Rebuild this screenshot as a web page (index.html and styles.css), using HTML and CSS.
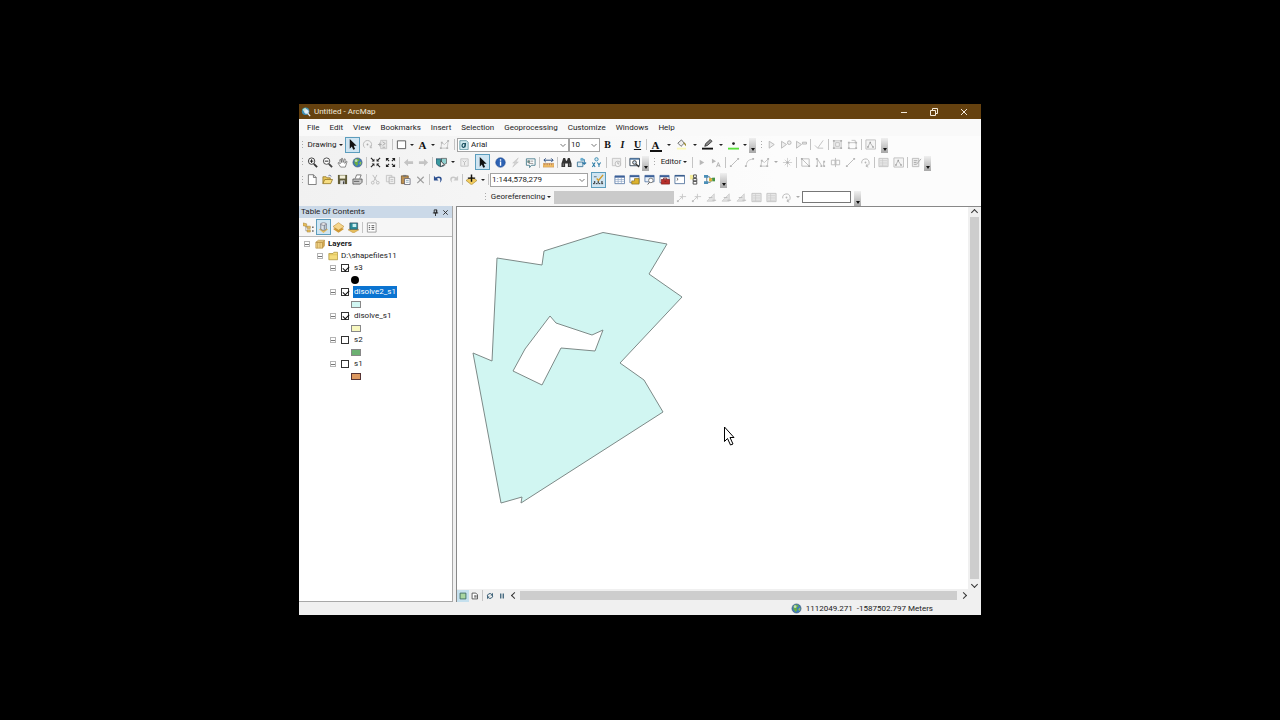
FILE: index.html
```
<!DOCTYPE html>
<html lang="en">
<head>
  <meta charset="UTF-8">
  <meta name="viewport" content="width=device-width, initial-scale=1.0">
  <title>Untitled - ArcMap</title>
  <link rel="stylesheet" href="styles.css">
</head>
<body>
  <!-- icon set -->
  <svg class="sprite" aria-hidden="true">
    <symbol id="i-arrow" viewBox="0 0 12 12"><path d="M3 0v10.500l2.300-2.300 1.500 3.500 2-.9L7.300 7.400h3.200z" fill="#111"/></symbol>
    <symbol id="i-rotate" viewBox="0 0 12 12"><path d="M3 9.500a4.500 4.500 0 1 1 6 0M9 9.500V7M9 9.500h2" fill="none" stroke="#b8b8b8"/><circle cx="6" cy="6" r="1" fill="#aaa"/></symbol>
    <symbol id="i-zoomto" viewBox="0 0 12 12"><path d="M4 1.500h6.500v9H4z" fill="#e8e8e8" stroke="#c4c4c4"/><path d="M1 6h4M3 4v4M6 3l3 2-3 2M6 9h3" fill="none" stroke="#aaa"/></symbol>
    <symbol id="i-rect" viewBox="0 0 12 12"><path d="M1.500 2h9v8.500h-9z" fill="#fff" stroke="#555"/></symbol>
    <symbol id="i-vertex" viewBox="0 0 12 12"><path d="M2 10L3 4l3 2 4-4-1 8z" fill="none" stroke="#c4c4c4"/><path d="M1 9h2v2H1zM2 3h2v2H2zM9 1h2v2H9zM8 9h2v2H8z" fill="#b5b5b5"/></symbol>
    <symbol id="i-zoomin" viewBox="0 0 12 12"><circle cx="5" cy="4.500" r="3.500" fill="#fff" stroke="#333"/><path d="M7.500 7.500L11 11" stroke="#333" stroke-width="2"/><path d="M3 4.500h4M5 2.500v4" stroke="#111"/></symbol>
    <symbol id="i-zoomout" viewBox="0 0 12 12"><circle cx="5" cy="4.500" r="3.500" fill="#fff" stroke="#444"/><path d="M7.500 7.500L11 11" stroke="#444" stroke-width="2"/><path d="M3 4.500h4" stroke="#111"/></symbol>
    <symbol id="i-pan" viewBox="0 0 12 12"><path d="M4 11L1 6.500l1-.6L3.500 7.500 3 3l1-.4L5 6l0-4.500h1L6.700 6 8 2l1 .3L8.500 7l1.700-2.500.8.500L9 11z" fill="#fff" stroke="#555" stroke-width=".7"/></symbol>
    <symbol id="i-globe" viewBox="0 0 12 12"><circle cx="6" cy="6" r="5" fill="#3c7cc0" stroke="#456" stroke-width=".6"/><path d="M3 2.500l4-1 1.500 2L6 5.500l1 2L5 10 2.500 6.500z" fill="#69ab45"/><path d="M9 5l1.500 1L9 9 8 7z" fill="#8cc152"/><circle cx="4.500" cy="4" r="1.500" fill="#fff" opacity=".6"/></symbol>
    <symbol id="i-shrink" viewBox="0 0 12 12"><path d="M1 1l3 3M11 1L8 4M1 11l3-3M11 11L8 8" stroke="#222" stroke-width="1.200"/><path d="M4.800 1.800v3h-3zM7.200 1.800v3h3zM4.800 10.200v-3h-3zM7.200 10.200v-3h3z" fill="#222"/></symbol>
    <symbol id="i-grow" viewBox="0 0 12 12"><path d="M2 2l2.500 2.500M10 2L7.500 4.500M2 10l2.500-2.500M10 10L7.500 7.500" stroke="#222" stroke-width="1.200"/><path d="M1 1h3.500L1 4.500zM11 1H7.500L11 4.500zM1 11h3.500L1 7.500zM11 11H7.500L11 7.500z" fill="#222"/></symbol>
    <symbol id="i-back" viewBox="0 0 12 12"><path d="M1 6l4.500-4v2.500H11v3H5.500V10z" fill="#c4c4c4"/></symbol>
    <symbol id="i-forward" viewBox="0 0 12 12"><path d="M11 6L6.500 2v2.500H1v3h5.500V10z" fill="#c4c4c4"/></symbol>
    <symbol id="i-select" viewBox="0 0 12 12"><path d="M0 2h6v4l2 1v3H3L0 7z" fill="#3b9aa0" stroke="#235" stroke-width=".7"/><path d="M6 1.500h5.500v5.500L9 8 6 6z" fill="#8fd0cf" stroke="#444" stroke-width=".7"/><path d="M5 4v7l2-2h2.500z" fill="#fff" stroke="#222" stroke-width=".7"/></symbol>
    <symbol id="i-clear" viewBox="0 0 12 12"><path d="M2 2h8v8H2z" fill="#eee" stroke="#c4c4c4"/><path d="M4 4l2 2 2-2M6 6v3" fill="none" stroke="#bbb"/></symbol>
    <symbol id="i-info" viewBox="0 0 12 12"><circle cx="6" cy="6" r="5.200" fill="#2c62b4" stroke="#1d4688" stroke-width=".6"/><path d="M5.300 2.500h1.500V4H5.300zM5.300 5h1.500v4.500H5.300z" fill="#fff"/></symbol>
    <symbol id="i-bolt" viewBox="0 0 12 12"><path d="M9 1L3 6.500h2.500L3 11l6-5.500H6.500z" fill="#d4d4d4" stroke="#bbb" stroke-width=".5"/></symbol>
    <symbol id="i-popup" viewBox="0 0 12 12"><path d="M1.500 2h9.500v7H7L5 11.500V9H1.500z" fill="#fff" stroke="#4a7d8c"/><path d="M3 4h2v2H3zM6 4.500h3M4 7h5" fill="#5a9" stroke="#666" stroke-width=".7"/></symbol>
    <symbol id="i-measure" viewBox="0 0 12 12"><path d="M0 7h12v4H0z" fill="#f2c166" stroke="#c08a50" stroke-width=".6"/><path d="M2 7v2M4.500 7v2M7 7v2M9.500 7v2" stroke="#845" stroke-width=".6"/><path d="M1 3.500h10M3 1.500L1 3.500l2 2M9 1.500l2 2-2 2" fill="none" stroke="#247"/></symbol>
    <symbol id="i-find" viewBox="0 0 12 12"><path d="M2.500 1h2l1 3h1l1-3h2L11.500 7v4H7.500V7h-3v4H.5V7z" fill="#333"/><path d="M2.500 7v3M9.500 7v3" stroke="#888"/></symbol>
    <symbol id="i-route" viewBox="0 0 12 12"><path d="M1.500 5.500h6v5h-6z" fill="#dcebf3" stroke="#447a9a"/><path d="M5 3h4v5M7 6l2 2 2-2" fill="none" stroke="#2f7aa8" stroke-width="1.200"/><path d="M5 1h3v3H5z" fill="#6aaed0"/></symbol>
    <symbol id="i-xy" viewBox="0 0 12 12"><circle cx="6" cy="2.500" r="1.800" fill="#d7edf5" stroke="#3b8bb0"/><path d="M1.500 6l3 5M4.500 6l-3 5M7 6l1.700 2.500L10.500 6M8.700 8.500V11" fill="none" stroke="#2679a5" stroke-width="1.100"/></symbol>
    <symbol id="i-time" viewBox="0 0 12 12"><path d="M1.500 1.500h9v8h-9z" fill="#eee" stroke="#c4c4c4"/><circle cx="7.500" cy="7.500" r="3" fill="#f5f5f5" stroke="#bbb"/><path d="M7.500 5.500v2H9" fill="none" stroke="#aaa"/></symbol>
    <symbol id="i-viewer" viewBox="0 0 12 12"><path d="M1 1.500h10.500v8H1z" fill="#fff" stroke="#345"/><path d="M1 2.200h10" stroke="#4a78a8" stroke-width="1.500"/><circle cx="6" cy="6" r="2" fill="#cde" stroke="#333"/><path d="M7.500 7.500L11 11" stroke="#333" stroke-width="1.500"/></symbol>
    <symbol id="i-new" viewBox="0 0 12 12"><path d="M1.500.8H7L10 3.800v7.700H1.500z" fill="#fff" stroke="#555" stroke-width=".8"/><path d="M7 .8v3h3" fill="none" stroke="#555" stroke-width=".8"/></symbol>
    <symbol id="i-open" viewBox="0 0 12 12"><path d="M1 10.500V3h3.500l1 1.200H9V6" fill="#e8c65a" stroke="#8a6d1d" stroke-width=".8"/><path d="M1 10.500L3 6h8.500l-2 4.500z" fill="#f7de82" stroke="#8a6d1d" stroke-width=".8"/><path d="M7 2c1-1 2.500-.8 3 .8" fill="none" stroke="#458" stroke-width=".8"/></symbol>
    <symbol id="i-save" viewBox="0 0 12 12"><path d="M1 1h10v10H1z" fill="#5f5b38"/><path d="M3 1.500h6V5H3z" fill="#f3f0d8"/><path d="M3.500 7h5v4h-5z" fill="#ddd"/><path d="M6.500 8H8v3H6.500z" fill="#444"/></symbol>
    <symbol id="i-print" viewBox="0 0 12 12"><path d="M3.500 5L5 1h5L8.500 5" fill="#fff" stroke="#555" stroke-width=".8"/><path d="M1 5.500h10V9l-2 2H1z" fill="#ccc" stroke="#444" stroke-width=".8"/><path d="M2 8h6" stroke="#555"/></symbol>
    <symbol id="i-cut" viewBox="0 0 12 12"><path d="M3 1l4.500 7M7.500 1L4 8" stroke="#bbb"/><circle cx="3" cy="9.500" r="1.500" fill="none" stroke="#bbb"/><circle cx="8.500" cy="9.500" r="1.500" fill="none" stroke="#bbb"/></symbol>
    <symbol id="i-copy" viewBox="0 0 12 12"><path d="M1.500 1.500h6v7h-6z" fill="#eee" stroke="#c4c4c4"/><path d="M4.500 3.500h6v7h-6z" fill="#eee" stroke="#b5b5b5"/><path d="M6 6h3M6 8h3" stroke="#c4c4c4"/></symbol>
    <symbol id="i-paste" viewBox="0 0 12 12"><path d="M1.500 2h7.500v8.500H1.500z" fill="#bd9152" stroke="#6d5024" stroke-width=".8"/><path d="M3.500 1h3.500v2H3.500z" fill="#777"/><path d="M5 5h6v6.500H5z" fill="#fff" stroke="#556" stroke-width=".8"/><path d="M6.500 7h3M6.500 9h3" stroke="#79a" stroke-width=".8"/></symbol>
    <symbol id="i-delete" viewBox="0 0 12 12"><path d="M2.500 3l7 7M9.500 3l-7 7" stroke="#9d9d9d" stroke-width="1.300"/></symbol>
    <symbol id="i-undo" viewBox="0 0 12 12"><path d="M1 2v5h5L4.200 5.200C7 3 9 5 7.500 9.500 11.500 6 9.500.5 2.800 3.700z" fill="#2c4f8f"/></symbol>
    <symbol id="i-redo" viewBox="0 0 12 12"><path d="M11 2v5H6l1.800-1.800C5 3 3 5 4.500 9.500.5 6 2.500.5 9.200 3.700z" fill="#c8c8c8"/></symbol>
    <symbol id="i-add" viewBox="0 0 12 12"><path d="M0 7l6-3.500L12 7l-6 4.800z" fill="#f3cd5f" stroke="#9b7a22" stroke-width=".6"/><path d="M6 .5v8M2 4.500h8" stroke="#111" stroke-width="1.600"/></symbol>
    <symbol id="i-sketch" viewBox="0 0 12 12"><path d="M0 10.500h12" stroke="#222" stroke-dasharray="2 1"/><path d="M1 8h1.500v1.500H1zM5 8h1.500v1.500H5zM9 8h1.500v1.500H9z" fill="#222"/><path d="M4 5l2 2 5-6" fill="none" stroke="#d49a25" stroke-width="1.500"/><path d="M1 3h3" stroke="#567"/></symbol>
    <symbol id="i-table" viewBox="0 0 12 12"><path d="M1 2h10.500v8.500H1z" fill="#fff" stroke="#446a9c" stroke-width=".8"/><path d="M1 2h10.500v2H1z" fill="#3b5f98"/><path d="M1 6h10M1 8h10M4.500 4v6M8 4v6" stroke="#8aa3c4" stroke-width=".7"/></symbol>
    <symbol id="i-catalog" viewBox="0 0 12 12"><path d="M1 1.500h10v8H1z" fill="#fff" stroke="#446a9c" stroke-width=".8"/><path d="M1 1.500h10v2H1z" fill="#3b5f98"/><path d="M3 7.500h3V5h5v6H3z" fill="#dcb22e" stroke="#7d6418" stroke-width=".7"/></symbol>
    <symbol id="i-searchwin" viewBox="0 0 12 12"><path d="M1 1.500h10v7H1z" fill="#e8f0f8" stroke="#446a9c" stroke-width=".8"/><path d="M1 1.500h10v2H1z" fill="#3b5f98"/><circle cx="7.500" cy="7" r="2.500" fill="#fff" stroke="#777"/><path d="M6 9l-2 2.500" stroke="#555"/></symbol>
    <symbol id="i-toolbox" viewBox="0 0 12 12"><path d="M1 1.500h10v8H1z" fill="#fff" stroke="#446a9c" stroke-width=".8"/><path d="M1 1.500h10v2H1z" fill="#3b5f98"/><path d="M2.500 6h9v5h-9z" fill="#b92f2b" stroke="#7a1816" stroke-width=".7"/><path d="M5 6V4.500h3.500V6M6 8h2" fill="none" stroke="#722"/></symbol>
    <symbol id="i-python" viewBox="0 0 12 12"><path d="M1 1.500h10.500v9H1z" fill="#fff" stroke="#345a8c" stroke-width=".8"/><path d="M1 2h10.500" stroke="#345a8c" stroke-width="1.600"/><path d="M3 4.500l1.500 1.300L3 7" fill="none" stroke="#333" stroke-width=".8"/></symbol>
    <symbol id="i-model" viewBox="0 0 12 12"><path d="M3 2v8M3 3h3l1 2h3M3 9h4l2-3" fill="none" stroke="#356" stroke-width=".8"/><path d="M0 1h4.500v3H0zM0 8h4.500v3H0z" fill="#4b8fb8"/><path d="M5.500 4.500h3v3.500h-3z" fill="#dab22c"/><path d="M9 4h3v4H9z" fill="#469444"/></symbol>
    <symbol id="i-steps" viewBox="0 0 12 12"><path d="M1 1h4v5H1z" fill="#f4ec9a"/><path d="M5 1h3v3H5zM4.500 5h4v2.500h-4zM4.500 8h4v3h-4z" fill="#fff" stroke="#333" stroke-width=".9"/></symbol>
    <symbol id="i-play" viewBox="0 0 12 12"><path d="M3.500 2.500l5.500 3.500-5.500 4z" fill="#eee" stroke="#b8b8b8"/></symbol>
    <symbol id="i-playplus" viewBox="0 0 12 12"><path d="M.5 2.500l5.500 3.500-5.500 4z" fill="#eee" stroke="#b8b8b8"/><circle cx="9" cy="4" r="2" fill="#eee" stroke="#b5b5b5"/></symbol>
    <symbol id="i-playminus" viewBox="0 0 12 12"><path d="M.5 2.500l5.500 3.500-5.500 4z" fill="#eee" stroke="#b8b8b8"/><path d="M7 3.500h4.500v2H7z" fill="#eee" stroke="#b5b5b5"/></symbol>
    <symbol id="i-line" viewBox="0 0 12 12"><path d="M2.500 9.500l7-7" stroke="#b8b8b8"/><path d="M1 9h2v2H1zM9 1h2v2H9z" fill="#b5b5b5"/></symbol>
    <symbol id="i-angle" viewBox="0 0 12 12"><path d="M1 7l3 3 6-8.500M4 10h6" fill="none" stroke="#c0c0c0"/></symbol>
    <symbol id="i-arc" viewBox="0 0 12 12"><path d="M2.500 10C2.500 5 5 2.500 9.500 2.500" fill="none" stroke="#c4c4c4"/><path d="M1 9h2v2H1zM9 1h2v2H9z" fill="#b5b5b5"/></symbol>
    <symbol id="i-group" viewBox="0 0 12 12"><path d="M2 2h8v8H2zM4 4h4v4H4z" fill="#f2f2f2" stroke="#c0c0c0"/><path d="M1 1h2v2H1zM9 1h2v2H9zM1 9h2v2H1zM9 9h2v2H9z" fill="#b0b0b0"/></symbol>
    <symbol id="i-ungroup" viewBox="0 0 12 12"><path d="M2 4h8v6.500H2zM5 1.500h4v3" fill="none" stroke="#c0c0c0"/><path d="M1 3h2v2H1zM9 3h2v2H9zM1 9h2v2H1zM9 9h2v2H9z" fill="#b5b5b5"/></symbol>
    <symbol id="i-stretch" viewBox="0 0 12 12"><path d="M2.500 10V2L7 9v1M9.500 5v5" fill="none" stroke="#bbb"/><path d="M1 1h2v2H1zM1 9h2v2H1zM6 9h2v2H6zM9 9h2v2H9zM9 4h2v2H9z" fill="#b5b5b5"/></symbol>
    <symbol id="i-peak" viewBox="0 0 12 12"><path d="M1 1h10.500v10H1z" fill="#f4f4f4" stroke="#c0c0c0"/><path d="M3 9l2.500-5 3.500 5" fill="none" stroke="#b5b5b5"/><path d="M2.500 8h1.500v1.500H2.500zM5 3h1.500v1.500H5zM8 8h1.500v1.500H8z" fill="#999"/></symbol>
    <symbol id="i-pointer" viewBox="0 0 12 12"><path d="M4 3v6L9 6z" fill="#b8b8b8"/></symbol>
    <symbol id="i-pointera" viewBox="0 0 12 12"><path d="M1 2v5l4.500-2.500z" fill="#b8b8b8"/><path d="M6 11l2-5 2 5M7 9.500h2.500" fill="none" stroke="#b0b0b0"/></symbol>
    <symbol id="i-star" viewBox="0 0 12 12"><path d="M6 1v10M1 6h10M3 3l6 6M9 3L3 9" stroke="#c4c4c4" stroke-width=".8"/><path d="M5 5h2v2H5z" fill="#aaa"/></symbol>
    <symbol id="i-cutpoly" viewBox="0 0 12 12"><path d="M2 2v8h8V2zM2 2l8 8" fill="none" stroke="#bbb"/><path d="M1 1h2v2H1zM9 9h2v2H9z" fill="#aaa"/></symbol>
    <symbol id="i-flip" viewBox="0 0 12 12"><path d="M1.500 3.500h4v5h-4zM6.500 3.500h4v5h-4zM6 1v10" fill="none" stroke="#bbb"/></symbol>
    <symbol id="i-turn" viewBox="0 0 12 12"><path d="M2 7a4 4 0 1 1 5 3M8 7.500L6.500 10 9 11" fill="none" stroke="#b5b5b5"/><circle cx="6" cy="6" r="1" fill="#b5b5b5"/></symbol>
    <symbol id="i-grid" viewBox="0 0 12 12"><path d="M1 1.500h10v9H1z" fill="#e8e8e8" stroke="#c4c4c4"/><path d="M2 4h8M2 6.500h8M2 9h8M5 2v8" stroke="#c8c8c8" stroke-width=".7"/></symbol>
    <symbol id="i-form" viewBox="0 0 12 12"><path d="M1.500 1.500h7v9h-7z" fill="#eee" stroke="#bbb"/><path d="M3 4h4M3 6h3M3 8h3M6 8l5-6" stroke="#aaa"/></symbol>
    <symbol id="i-fill" viewBox="0 0 12 12"><path d="M2 4.500L6 1l3 3.500L5.500 8z" fill="#eee" stroke="#444" stroke-width=".8"/><path d="M8 3.500c3 1 3.500 2.500 2.500 4.500L8.500 5" fill="#998a2c"/><path d="M1 10.500h10" stroke="#fbf9b8" stroke-width="2"/></symbol>
    <symbol id="i-pen" viewBox="0 0 12 12"><path d="M3 8l1-3 5-4.500 2 2-5 4.500z" fill="#888" stroke="#222" stroke-width=".8"/><path d="M0 10.500h12" stroke="#111" stroke-width="2"/></symbol>
    <symbol id="i-marker" viewBox="0 0 12 12"><circle cx="6" cy="5" r="1.500" fill="#222"/><path d="M0 10.500h12" stroke="#58e03a" stroke-width="2"/></symbol>
    <symbol id="i-link" viewBox="0 0 12 12"><path d="M2 10l5-5M7 2v6M4 5h7" stroke="#c8c8c8"/><path d="M1 9h2v2H1z" fill="#bbb"/></symbol>
    <symbol id="i-slant" viewBox="0 0 12 12"><path d="M1 10l8-8v8z" fill="#e2e2e2" stroke="#d0d0d0"/><path d="M3 6h4M7 9h4" stroke="#bbb"/></symbol>
    <symbol id="i-tree" viewBox="0 0 12 12"><path d="M3 4v5.500h4M3 5.500h4" fill="none" stroke="#999" stroke-width=".8"/><path d="M0 1l4 1v3L0 4zM4.500 4.500h3.500V7H4.500zM4.500 8.500h3.500V11H4.500z" fill="#e6bc5c" stroke="#a17b2a" stroke-width=".5"/><path d="M10 5h1.500v1.500H10zM10 9h1.500v1.500H10z" fill="#555"/></symbol>
    <symbol id="i-source" viewBox="0 0 12 12"><path d="M1 8l5-2 5 2-5 4z" fill="#e5bd5d"/><path d="M3 2v6c1.500 1.300 4.500 1.300 6 0V2z" fill="#dce4ea" stroke="#667" stroke-width=".8"/><path d="M7 3v5.500" stroke="#8b98a5" stroke-width="1.500"/><ellipse cx="6" cy="2.200" rx="3" ry="1.300" fill="#fff" stroke="#667" stroke-width=".8"/></symbol>
    <symbol id="i-layers" viewBox="0 0 12 12"><path d="M0 7.500L6 4.500l6 3-6 4.300z" fill="#d19a35"/><path d="M0 5l6-4.300L12 5 6 9z" fill="#f6d58b" stroke="#b8862c" stroke-width=".6"/></symbol>
    <symbol id="i-selection" viewBox="0 0 12 12"><path d="M0 8.500l6-2 6 2-6 3.500z" fill="#e5bd5d" stroke="#b8862c" stroke-width=".5"/><path d="M2 1h8.500v7H2z" fill="#2a8c9a" stroke="#345" stroke-width=".7"/><path d="M5 2h4v3.500H5z" fill="#c9eef0"/></symbol>
    <symbol id="i-options" viewBox="0 0 12 12"><path d="M1.500 1h9.500v10H1.500z" fill="#fff" stroke="#999"/><path d="M3 4h1.500M3 6h1.500M3 8h1.500M6 4h3M6 6h3M6 8h3" stroke="#555"/></symbol>
    <symbol id="i-stack" viewBox="0 0 12 12"><path d="M1 4l3-2.500h7.500L9 4zM1 4h8v7H1z" fill="#f0d184" stroke="#b89348" stroke-width=".8"/><path d="M9 4l2.500-2.500V8L9 11zM3 4v7M6 4v7" fill="#d4a84c" stroke="#b89348" stroke-width=".6"/></symbol>
    <symbol id="i-folder" viewBox="0 0 12 12"><path d="M1 10.500V3h5l1-1.500h4.500v9z" fill="#f4dc7b" stroke="#a3882c" stroke-width=".8"/><path d="M1 4.500h10.500" stroke="#d5b74c" stroke-width=".8"/></symbol>
    <symbol id="i-font" viewBox="0 0 12 12"><path d="M1 .8h8l2 2v8.700H1z" fill="#cfe9ee" stroke="#3d7f90" stroke-width=".8"/><ellipse cx="5.500" cy="6.500" rx="1.800" ry="2.300" transform="rotate(20 5.500 6.500)" fill="none" stroke="#124a5a" stroke-width="1.300"/><path d="M8 3.500L7 9" stroke="#124a5a" stroke-width="1.200"/></symbol>
    <symbol id="i-chevron" viewBox="0 0 8 8"><path d="M1.500 3L4 5.500 6.500 3" fill="none" stroke="#777"/></symbol>
    <symbol id="i-data" viewBox="0 0 12 12"><path d="M2.500 2.500h7v7h-7z" fill="#a9d6a0" stroke="#37655a"/></symbol>
    <symbol id="i-page" viewBox="0 0 12 12"><path d="M2.500 2.500h4.500l2 2v5h-6.500z" fill="#fff" stroke="#444"/><path d="M5 5h3v3H5z" fill="#888"/></symbol>
    <symbol id="i-refresh" viewBox="0 0 12 12"><path d="M3 7a3 3 0 0 1 5-3M9 5a3 3 0 0 1-5 3" fill="none" stroke="#345a72" stroke-width="1.200"/><path d="M9.500 2v3.500H6.500zM2.500 10V6.500h3z" fill="#345a72"/></symbol>
    <symbol id="i-pause" viewBox="0 0 12 12"><path d="M4.500 3v6M7.500 3v6" stroke="#345a72" stroke-width="1.500"/></symbol>
  </svg>

  <main class="window">
    <header class="titlebar">
      <svg class="app-icon" viewBox="0 0 12 12"><circle cx="5.500" cy="5" r="4.500" fill="#3b8fb5"/><path d="M2 3l3-2 2 2-2 3-2-1z" fill="#bfe3c8"/><circle cx="6.500" cy="5.500" r="2.300" fill="#dff3fa" stroke="#dde"/><path d="M8 7.500l3 3.500" stroke="#e8e8e8" stroke-width="1.500"/></svg>
      <h1>Untitled - ArcMap</h1>
      <div class="window-buttons">
        <button aria-label="Minimize"><svg viewBox="0 0 10 10"><path d="M2 5.500h6"/></svg></button>
        <button aria-label="Restore"><svg viewBox="0 0 10 10"><path d="M1.500 3.500h5v5h-5zM3.500 3.500v-2h5v5h-2"/></svg></button>
        <button aria-label="Close"><svg viewBox="0 0 10 10"><path d="M2 2l6 6M8 2L2 8"/></svg></button>
      </div>
    </header>

    <nav class="menubar">
      <button>File</button>
      <button>Edit</button>
      <button>View</button>
      <button>Bookmarks</button>
      <button>Insert</button>
      <button>Selection</button>
      <button>Geoprocessing</button>
      <button>Customize</button>
      <button>Windows</button>
      <button>Help</button>
    </nav>

    <div class="toolbars">
      <div class="toolbar-row">
        <i class="grip"></i>
        <button class="menu-button medium">Drawing</button>
        <button class="tool active" aria-label="Select elements"><svg><use href="#i-arrow"/></svg></button>
        <button class="tool" aria-label="Rotate"><svg><use href="#i-rotate"/></svg></button>
        <button class="tool" aria-label="Zoom to elements"><svg><use href="#i-zoomto"/></svg></button>
        <i class="sep wide"></i>
        <button class="tool narrow" aria-label="Rectangle"><svg><use href="#i-rect"/></svg></button>
        <button class="caret narrow" aria-label="Shapes"></button>
        <button class="tool narrow letter" aria-label="Text">A</button>
        <button class="caret narrow" aria-label="Text tools"></button>
        <button class="tool" aria-label="Edit vertices"><svg><use href="#i-vertex"/></svg></button>
        <i class="sep wide"></i>
        <label class="combo font-name"><svg class="combo-icon"><use href="#i-font"/></svg><select aria-label="Font"><option>Arial</option></select><svg class="chevron"><use href="#i-chevron"/></svg></label>
        <label class="combo font-size"><select aria-label="Font size"><option>10</option></select><svg class="chevron"><use href="#i-chevron"/></svg></label>
        <button class="tool letter bold">B</button>
        <button class="tool letter italic">I</button>
        <button class="tool letter underline">U</button>
        <i class="sep"></i>
        <button class="tool letter font-color" aria-label="Font color">A</button>
        <button class="caret" aria-label="Font colors"></button>
        <button class="tool" aria-label="Fill color"><svg><use href="#i-fill"/></svg></button>
        <button class="caret" aria-label="Fill colors"></button>
        <button class="tool" aria-label="Line color"><svg><use href="#i-pen"/></svg></button>
        <button class="caret" aria-label="Line colors"></button>
        <button class="tool" aria-label="Marker color"><svg><use href="#i-marker"/></svg></button>
        <button class="caret narrow" aria-label="Marker colors"></button>
        <button class="overflow" aria-label="Toolbar options"></button>
        <i class="gap"></i>
        <i class="grip"></i>
        <button class="tool" aria-label="Select topology"><svg><use href="#i-play"/></svg></button>
        <button class="tool" aria-label="Add to group"><svg><use href="#i-playplus"/></svg></button>
        <button class="tool" aria-label="Remove from group"><svg><use href="#i-playminus"/></svg></button>
        <i class="sep"></i>
        <button class="tool" aria-label="Angle"><svg><use href="#i-angle"/></svg></button>
        <i class="sep"></i>
        <button class="tool" aria-label="Group"><svg><use href="#i-group"/></svg></button>
        <button class="tool" aria-label="Ungroup"><svg><use href="#i-ungroup"/></svg></button>
        <i class="sep"></i>
        <button class="tool" aria-label="Profile"><svg><use href="#i-peak"/></svg></button>
        <i class="gap"></i>
        <button class="overflow" aria-label="Toolbar options"></button>
      </div>

      <div class="toolbar-row">
        <i class="grip"></i>
        <button class="tool" aria-label="Zoom in"><svg><use href="#i-zoomin"/></svg></button>
        <button class="tool" aria-label="Zoom out"><svg><use href="#i-zoomout"/></svg></button>
        <button class="tool" aria-label="Pan"><svg><use href="#i-pan"/></svg></button>
        <button class="tool" aria-label="Full extent"><svg><use href="#i-globe"/></svg></button>
        <i class="sep"></i>
        <button class="tool" aria-label="Fixed zoom in"><svg><use href="#i-shrink"/></svg></button>
        <button class="tool" aria-label="Fixed zoom out"><svg><use href="#i-grow"/></svg></button>
        <i class="sep"></i>
        <button class="tool" aria-label="Previous extent"><svg><use href="#i-back"/></svg></button>
        <button class="tool" aria-label="Next extent"><svg><use href="#i-forward"/></svg></button>
        <i class="sep"></i>
        <button class="tool" aria-label="Select features"><svg><use href="#i-select"/></svg></button>
        <button class="caret narrow" aria-label="Selection tools"></button>
        <button class="tool" aria-label="Clear selection"><svg><use href="#i-clear"/></svg></button>
        <i class="gap"></i>
        <button class="tool active" aria-label="Select elements"><svg><use href="#i-arrow"/></svg></button>
        <i class="gap"></i>
        <button class="tool" aria-label="Identify"><svg><use href="#i-info"/></svg></button>
        <button class="tool" aria-label="Hyperlink"><svg><use href="#i-bolt"/></svg></button>
        <button class="tool" aria-label="HTML popup"><svg><use href="#i-popup"/></svg></button>
        <i class="sep"></i>
        <button class="tool" aria-label="Measure"><svg><use href="#i-measure"/></svg></button>
        <i class="sep"></i>
        <button class="tool" aria-label="Find"><svg><use href="#i-find"/></svg></button>
        <button class="tool" aria-label="Find route"><svg><use href="#i-route"/></svg></button>
        <button class="tool" aria-label="Go to XY"><svg><use href="#i-xy"/></svg></button>
        <i class="sep wide"></i>
        <button class="tool" aria-label="Time slider"><svg><use href="#i-time"/></svg></button>
        <i class="sep"></i>
        <button class="tool" aria-label="Viewer window"><svg><use href="#i-viewer"/></svg></button>
        <button class="overflow" aria-label="Toolbar options"></button>
        <i class="gap"></i>
        <i class="grip"></i>
        <button class="menu-button small">Editor</button>
        <i class="sep"></i>
        <button class="tool" aria-label="Edit tool"><svg><use href="#i-pointer"/></svg></button>
        <button class="tool" aria-label="Edit annotation"><svg><use href="#i-pointera"/></svg></button>
        <i class="sep"></i>
        <button class="tool" aria-label="Straight segment"><svg><use href="#i-line"/></svg></button>
        <button class="tool" aria-label="Arc segment"><svg><use href="#i-arc"/></svg></button>
        <button class="tool" aria-label="Trace"><svg><use href="#i-vertex"/></svg></button>
        <button class="caret narrow muted" aria-label="Trace options"></button>
        <button class="tool" aria-label="Point"><svg><use href="#i-star"/></svg></button>
        <i class="sep"></i>
        <button class="tool" aria-label="Cut polygons"><svg><use href="#i-cutpoly"/></svg></button>
        <button class="tool" aria-label="Reshape"><svg><use href="#i-stretch"/></svg></button>
        <button class="tool" aria-label="Mirror"><svg><use href="#i-flip"/></svg></button>
        <button class="tool" aria-label="Split"><svg><use href="#i-line"/></svg></button>
        <button class="tool" aria-label="Rotate features"><svg><use href="#i-turn"/></svg></button>
        <i class="sep"></i>
        <button class="tool" aria-label="Attributes"><svg><use href="#i-grid"/></svg></button>
        <button class="tool" aria-label="Sketch properties"><svg><use href="#i-peak"/></svg></button>
        <i class="sep"></i>
        <button class="tool" aria-label="Create features"><svg><use href="#i-form"/></svg></button>
        <button class="overflow" aria-label="Toolbar options"></button>
      </div>

      <div class="toolbar-row">
        <i class="grip"></i>
        <button class="tool" aria-label="New"><svg><use href="#i-new"/></svg></button>
        <button class="tool" aria-label="Open"><svg><use href="#i-open"/></svg></button>
        <button class="tool" aria-label="Save"><svg><use href="#i-save"/></svg></button>
        <button class="tool" aria-label="Print"><svg><use href="#i-print"/></svg></button>
        <i class="sep"></i>
        <button class="tool" aria-label="Cut"><svg><use href="#i-cut"/></svg></button>
        <button class="tool" aria-label="Copy"><svg><use href="#i-copy"/></svg></button>
        <button class="tool" aria-label="Paste"><svg><use href="#i-paste"/></svg></button>
        <button class="tool" aria-label="Delete"><svg><use href="#i-delete"/></svg></button>
        <i class="sep"></i>
        <button class="tool" aria-label="Undo"><svg><use href="#i-undo"/></svg></button>
        <button class="tool" aria-label="Redo"><svg><use href="#i-redo"/></svg></button>
        <i class="sep"></i>
        <button class="tool" aria-label="Add data"><svg><use href="#i-add"/></svg></button>
        <button class="caret narrow" aria-label="Add data options"></button>
        <i class="sep"></i>
        <label class="combo scale"><select aria-label="Map scale"><option>1:144,578,279</option></select><svg class="chevron"><use href="#i-chevron"/></svg></label>
        <i class="gap"></i>
        <button class="tool active" aria-label="Editor toolbar"><svg><use href="#i-sketch"/></svg></button>
        <i class="gap"></i>
        <i class="gap"></i>
        <button class="tool" aria-label="Table of contents"><svg><use href="#i-table"/></svg></button>
        <button class="tool" aria-label="Catalog"><svg><use href="#i-catalog"/></svg></button>
        <button class="tool" aria-label="Search"><svg><use href="#i-searchwin"/></svg></button>
        <button class="tool" aria-label="ArcToolbox"><svg><use href="#i-toolbox"/></svg></button>
        <button class="tool" aria-label="Python"><svg><use href="#i-python"/></svg></button>
        <button class="tool" aria-label="Results"><svg><use href="#i-steps"/></svg></button>
        <button class="tool" aria-label="ModelBuilder"><svg><use href="#i-model"/></svg></button>
        <i class="gap"></i>
        <button class="overflow" aria-label="Toolbar options"></button>
      </div>

      <div class="toolbar-row georef">
        <i class="grip"></i>
        <button class="menu-button large">Georeferencing</button>
        <select class="layer-select" aria-label="Georeferenced layer" disabled></select>
        <button class="tool" aria-label="Add control points"><svg><use href="#i-link"/></svg></button>
        <button class="tool" aria-label="Auto registration"><svg><use href="#i-link"/></svg></button>
        <button class="tool" aria-label="Select link"><svg><use href="#i-slant"/></svg></button>
        <button class="tool" aria-label="Zoom to link"><svg><use href="#i-slant"/></svg></button>
        <button class="tool" aria-label="Delete link"><svg><use href="#i-slant"/></svg></button>
        <button class="tool" aria-label="Viewer"><svg><use href="#i-grid"/></svg></button>
        <button class="tool" aria-label="Link table"><svg><use href="#i-grid"/></svg></button>
        <button class="tool" aria-label="Rotate raster"><svg><use href="#i-turn"/></svg></button>
        <button class="caret narrow muted" aria-label="Raster tools"></button>
        <input class="angle" type="text" aria-label="Angle">
        <i class="gap"></i>
        <button class="overflow" aria-label="Toolbar options"></button>
      </div>
    </div>

    <div class="workspace">
      <aside class="toc">
        <div class="toc-header">
          <h2>Table Of Contents</h2>
          <button aria-label="Pin"><svg viewBox="0 0 8 8"><path d="M2.500 1h3v3.500h-3zM1 4.500h6M4 4.500V8M5 1v3.500"/></svg></button>
          <button aria-label="Close"><svg viewBox="0 0 8 8"><path d="M1.500 1.500l5 5M6.500 1.500l-5 5"/></svg></button>
        </div>
        <div class="toc-tools">
          <button class="tool" aria-label="List by drawing order"><svg><use href="#i-tree"/></svg></button>
          <button class="tool active" aria-label="List by source"><svg><use href="#i-source"/></svg></button>
          <button class="tool" aria-label="List by visibility"><svg><use href="#i-layers"/></svg></button>
          <button class="tool" aria-label="List by selection"><svg><use href="#i-selection"/></svg></button>
          <i class="sep"></i>
          <button class="tool" aria-label="Options"><svg><use href="#i-options"/></svg></button>
        </div>
        <ul class="tree">
          <li><div class="node"><i class="toggle"></i><svg class="node-icon"><use href="#i-stack"/></svg><b>Layers</b></div>
            <ul>
              <li><div class="node"><i class="toggle"></i><svg class="node-icon"><use href="#i-folder"/></svg><span>D:\shapefiles11</span></div>
                <ul>
                  <li><div class="node"><i class="toggle"></i><input type="checkbox" id="s3" checked><label for="s3">s3</label></div>
                    <div class="symbol"><i class="dot"></i></div></li>
                  <li><div class="node"><i class="toggle"></i><input type="checkbox" id="disolve2" checked><label class="selected" for="disolve2">disolve2_s1</label></div>
                    <div class="symbol"><i class="swatch aqua"></i></div></li>
                  <li><div class="node"><i class="toggle"></i><input type="checkbox" id="disolve" checked><label for="disolve">disolve_s1</label></div>
                    <div class="symbol"><i class="swatch yellow"></i></div></li>
                  <li><div class="node"><i class="toggle"></i><input type="checkbox" id="s2"><label for="s2">s2</label></div>
                    <div class="symbol"><i class="swatch green"></i></div></li>
                  <li><div class="node"><i class="toggle"></i><input type="checkbox" id="s1"><label for="s1">s1</label></div>
                    <div class="symbol"><i class="swatch orange"></i></div></li>
                </ul>
              </li>
            </ul>
          </li>
        </ul>
      </aside>

      <section class="map-pane">
        <div class="map">
          <svg class="features" width="300" height="320" viewBox="0 0 300 320">
            <path fill-rule="evenodd" d="M146 25.500L210 37 192 67 225 90 163 156 187 173 206 205 64 296 65 290 44 296 16 146 35 154 40 51 85 58 87 44z
              M93 109L99 116 135 128 146 123 138 144 104 141 85 178 56 164 68 142z"/>
            <path class="pointer" d="M267.500 220v14.500l3-3 3 6.500 2.500-1-3-6.500h4z"/>
          </svg>
        </div>
        <div class="scroll-v">
          <button class="up" aria-label="Scroll up"></button>
          <div class="thumb"></div>
          <button class="down" aria-label="Scroll down"></button>
        </div>
        <div class="scroll-h">
          <button class="view active" aria-label="Data view"><svg><use href="#i-data"/></svg></button>
          <button class="view" aria-label="Layout view"><svg><use href="#i-page"/></svg></button>
          <i class="sep"></i>
          <button class="view" aria-label="Refresh"><svg><use href="#i-refresh"/></svg></button>
          <button class="view" aria-label="Pause drawing"><svg><use href="#i-pause"/></svg></button>
          <button class="view left" aria-label="Scroll left"></button>
          <div class="thumb"></div>
          <button class="view right" aria-label="Scroll right"></button>
        </div>
      </section>
    </div>

    <footer class="statusbar">
      <svg><use href="#i-globe"/></svg>
      <span>1112049.271&nbsp; -1587502.797 Meters</span>
    </footer>
  </main>
</body>
</html>
```
FILE: styles.css
```
* {
  box-sizing: border-box;
}
body {
  margin: 0;
  min-height: 100vh;
  padding: 104px 299px 105px;
  display: flex;
  background: #000;
  color: #222;
  font-family: Roboto, "Noto Sans", sans-serif;
  font-size: 8px;
  line-height: 12px;
}
button, select, input {
  margin: 0;
  padding: 0;
  border: 0;
  background: none;
  color: inherit;
  font: inherit;
}
h1, h2 {
  margin: 0;
  font-size: 8px;
  font-weight: normal;
}
.sprite {
  display: none;
}
.window {
  flex: 1;
  min-width: 0;
  display: flex;
  flex-direction: column;
  background: #f0f0f0;
}

/* title and menu */
.titlebar {
  display: flex;
  align-items: center;
  height: 15px;
  padding: 0 2px;
  background: #65410f;
  color: #f3e9da;
}
.app-icon {
  width: 10px;
  height: 10px;
  margin-right: 3px;
}
.titlebar h1 {
  flex: 1;
}
.window-buttons {
  display: flex;
}
.window-buttons button {
  width: 30px;
  height: 15px;
  display: flex;
  align-items: center;
  justify-content: center;
}
.window-buttons svg {
  width: 10px;
  height: 10px;
  fill: none;
  stroke: #f3e9da;
}
.menubar {
  display: flex;
  align-items: center;
  height: 17px;
  padding-left: 3px;
  background: #f9f9f9;
}
.menubar button {
  padding: 0 5px;
}

/* toolbars */
.toolbars {
  height: 70px;
  display: flex;
  flex-direction: column;
  justify-content: space-between;
  background: linear-gradient(to right, #f1f1f1, #fcfcfc 70%);
}
.toolbar-row {
  display: flex;
  align-items: center;
  height: 17px;
  padding-left: 1px;
}
.toolbar-row.georef {
  padding-left: 184px;
}
.toolbar-row > * {
  flex: none;
}
.grip {
  width: 5px;
  height: 10px;
  background: radial-gradient(circle, #aaa 1px, transparent 1px) 0 0 / 5px 3px;
}
.sep {
  width: 3px;
  height: 11px;
  background: linear-gradient(#c4c4c4, #c4c4c4) center / 1px 100% no-repeat;
}
.sep.wide {
  width: 5px;
}
.gap {
  width: 3px;
}
.tool {
  width: 15px;
  height: 16px;
  display: flex;
  align-items: center;
  justify-content: center;
}
.tool.narrow {
  width: 13px;
}
.tool svg {
  width: 11px;
  height: 11px;
}
.tool.active {
  border: 1px solid #5c9dbd;
  background: #cfe5f2;
}
.letter {
  font-family: "Liberation Serif", serif;
  font-size: 11px;
  font-weight: bold;
  color: #111;
}
.letter.bold, .letter.italic, .letter.underline {
  font-size: 10px;
}
.letter.italic {
  font-style: italic;
}
.letter.underline {
  text-decoration: underline;
}
.letter.font-color {
  background: linear-gradient(#111, #111) center 13px / 12px 2px no-repeat;
}
.menu-button {
  display: flex;
  align-items: center;
  justify-content: center;
  gap: 2px;
  white-space: nowrap;
}
.menu-button.small {
  width: 34px;
}
.menu-button.medium {
  width: 40px;
}
.menu-button.large {
  width: 66px;
}
.menu-button::after, .caret::after {
  content: "";
  border: 2px solid transparent;
  border-top-color: #222;
  border-bottom: 0;
}
.caret {
  width: 11px;
  height: 16px;
  display: flex;
  align-items: center;
  justify-content: center;
}
.caret.narrow {
  width: 8px;
}
.caret.muted::after {
  border-top-color: #aaa;
}
.overflow {
  width: 7px;
  height: 15px;
  margin-top: 2px;
  display: flex;
  align-items: flex-end;
  justify-content: center;
  padding-bottom: 2px;
  background: linear-gradient(#f0f0f0, #a8a8a8);
}
.overflow::after {
  content: "";
  border: 2px solid transparent;
  border-top: 3px solid #111;
  border-bottom: 0;
}
.combo {
  display: flex;
  align-items: center;
  height: 14px;
  border: 1px solid #a3a3a3;
  background: #fff;
}
.combo select {
  flex: 1;
  min-width: 0;
  height: 12px;
  padding-left: 1px;
  appearance: none;
  outline: 0;
}
.combo-icon {
  width: 10px;
  height: 10px;
  margin: 0 1px;
}
.chevron {
  width: 8px;
  height: 8px;
  margin-right: 1px;
}
.font-name {
  width: 112px;
}
.font-size {
  width: 31px;
}
.scale {
  width: 98px;
}
.layer-select {
  width: 120px;
  height: 13px;
  appearance: none;
  background: #cacaca;
  opacity: 1;
}
.angle {
  width: 49px;
  height: 12px;
  border: 1px solid #777;
  background: #fff;
}

/* table of contents */
.workspace {
  flex: 1;
  display: flex;
  gap: 3px;
}
.toc {
  width: 154px;
  display: flex;
  flex-direction: column;
  border-right: 1px solid #a8a8a8;
  border-bottom: 1px solid #a8a8a8;
}
.toc-header {
  display: flex;
  align-items: center;
  height: 12px;
  padding: 0 2px;
  background: #cbd9e8;
}
.toc-header h2 {
  flex: 1;
}
.toc-header button {
  width: 10px;
  height: 12px;
}
.toc-header svg {
  display: block;
  width: 7px;
  height: 7px;
  margin: 0 auto;
  fill: none;
  stroke: #222;
}
.toc-tools {
  display: flex;
  align-items: center;
  height: 18px;
  padding-left: 2px;
  background: #f6f6f6;
}
.tree {
  flex: 1;
  padding: 1px 0 0 5px;
  border-top: 1px solid #bbb;
  background: #fff;
}
.tree, .tree ul {
  margin: 0;
  list-style: none;
}
.tree ul {
  padding-left: 13px;
}
.node {
  display: flex;
  align-items: center;
  height: 12px;
  white-space: nowrap;
}
.toggle {
  width: 6px;
  height: 6px;
  margin-right: 5px;
  border: 1px solid #b5b5b5;
  background: linear-gradient(#777, #777) center / 4px 1px no-repeat;
}
.node-icon {
  width: 10px;
  height: 10px;
  margin-right: 3px;
}
.node input {
  appearance: none;
  width: 8px;
  height: 8px;
  margin-right: 4px;
  border: 1px solid #333;
  background: #fff;
}
.node input:checked::after {
  content: "";
  display: block;
  width: 5px;
  height: 3px;
  margin: 1px 0 0 1px;
  border: solid #111;
  border-width: 0 0 1px 1px;
  transform: rotate(-45deg);
}
.node label {
  padding: 0 1px;
}
.node .selected {
  background: #0b74d1;
  color: #fff;
}
.symbol {
  display: flex;
  align-items: center;
  height: 12px;
  padding-left: 21px;
}
.dot {
  width: 8px;
  height: 8px;
  border-radius: 50%;
  background: #000;
}
.swatch {
  width: 10px;
  height: 7px;
  border: 1px solid #888;
}
.aqua {
  background: #d1f6f2;
}
.yellow {
  background: #f8f8c0;
}
.green {
  background: #6bb071;
}
.orange {
  background: #dc9860;
  border-color: #533;
}

/* map */
.map-pane {
  flex: 1;
  min-width: 0;
  display: grid;
  grid-template-columns: 1fr 13px;
  grid-template-rows: 1fr 13px;
  border-left: 1px solid #888;
  border-top: 1px solid #888;
}
.map {
  background: #fff;
  overflow: hidden;
}
.features {
  display: block;
  fill: #d1f6f2;
  stroke: #7d8a88;
  stroke-width: 1;
}
.features .pointer {
  fill: #fff;
  stroke: #000;
}
.scroll-v {
  display: flex;
  flex-direction: column;
  align-items: center;
}
.scroll-v button {
  width: 12px;
  height: 10px;
}
.thumb {
  flex: 1;
  background: #cdcdcd;
}
.scroll-v .thumb {
  width: 9px;
}
.scroll-h {
  grid-column: 1 / 3;
  display: flex;
  align-items: center;
  padding-right: 12px;
}
.scroll-h .thumb {
  height: 9px;
}
.view {
  width: 12px;
  height: 12px;
}
.view svg {
  display: block;
  width: 10px;
  height: 10px;
  margin: 0 auto;
}
.view.active {
  background: #c5e0ee;
}
.up::after, .down::after, .left::after, .right::after {
  content: "";
  display: block;
  width: 4px;
  height: 4px;
  margin: 0 auto;
  border: solid #333;
  border-width: 1px 0 0 1px;
}
.up::after {
  transform: rotate(45deg);
}
.down::after {
  transform: rotate(225deg);
}
.left::after {
  transform: rotate(-45deg);
}
.right::after {
  transform: rotate(135deg);
}
.statusbar {
  display: flex;
  align-items: center;
  justify-content: flex-end;
  gap: 4px;
  height: 13px;
  padding-right: 48px;
}
.statusbar svg {
  width: 11px;
  height: 11px;
}
```
